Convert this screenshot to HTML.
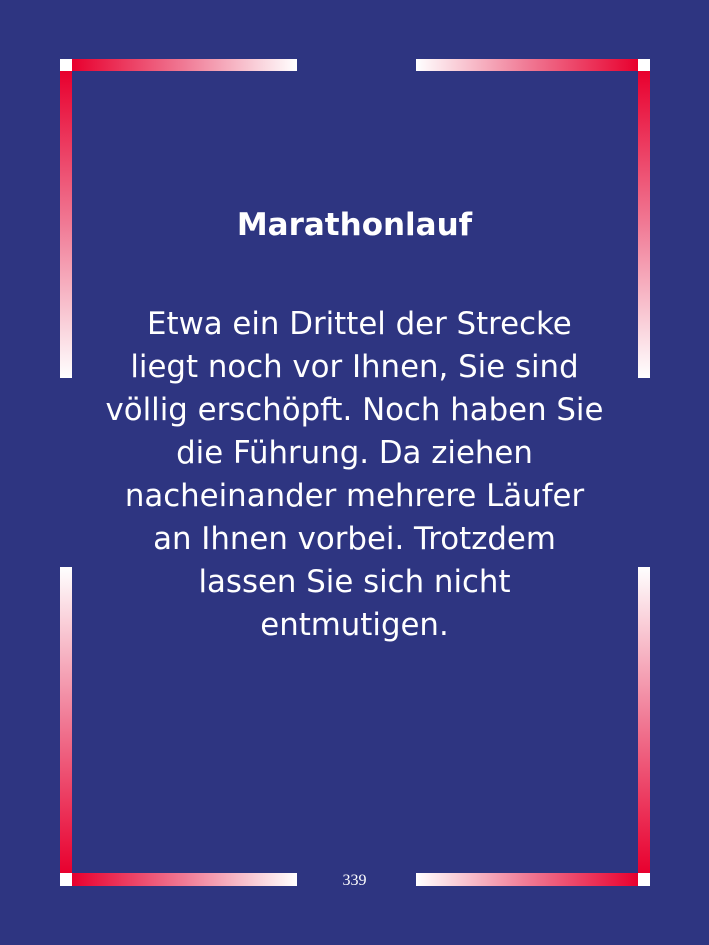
<!DOCTYPE html>
<html><head><meta charset="utf-8"><style>
html,body{margin:0;padding:0}
body{width:709px;height:945px;background:#2e3581;position:relative;overflow:hidden;font-family:"DejaVu Sans","Liberation Sans",sans-serif;color:#fff}
.b{position:absolute}
.sq{background:#fff;width:12px;height:12px}
h1{position:absolute;top:204px;left:0;width:709px;text-align:center;font-size:31px;font-weight:bold;margin:0;line-height:42px}
.t{position:absolute;top:303px;left:0;width:709px;text-align:center;font-size:30.8px;line-height:43px}
.n{position:absolute;top:872px;left:0;width:709px;text-align:center;font-family:"Liberation Serif",serif;font-size:16px}
</style></head><body>
<div class="b sq" style="left:60px;top:59px"></div>
<div class="b" style="left:72px;top:59px;width:225px;height:12px;background:linear-gradient(90deg,#e8002e,#f07a95 50%,#fff)"></div>
<div class="b" style="left:60px;top:71px;width:12px;height:307px;background:linear-gradient(180deg,#e8002e,#f07a95 50%,#fff)"></div>
<div class="b sq" style="left:638px;top:59px"></div>
<div class="b" style="left:416px;top:59px;width:222px;height:12px;background:linear-gradient(270deg,#e8002e,#f07a95 50%,#fff)"></div>
<div class="b" style="left:638px;top:71px;width:12px;height:307px;background:linear-gradient(180deg,#e8002e,#f07a95 50%,#fff)"></div>
<div class="b" style="left:60px;top:567px;width:12px;height:306px;background:linear-gradient(0deg,#e8002e,#f07a95 50%,#fff)"></div>
<div class="b sq" style="left:60px;top:873px;height:13px"></div>
<div class="b" style="left:72px;top:873px;width:225px;height:13px;background:linear-gradient(90deg,#e8002e,#f07a95 50%,#fff)"></div>
<div class="b" style="left:638px;top:567px;width:12px;height:306px;background:linear-gradient(0deg,#e8002e,#f07a95 50%,#fff)"></div>
<div class="b sq" style="left:638px;top:873px;height:13px"></div>
<div class="b" style="left:416px;top:873px;width:222px;height:13px;background:linear-gradient(270deg,#e8002e,#f07a95 50%,#fff)"></div>
<h1>Marathonlauf</h1>
<div class="t">&nbsp;Etwa ein Drittel der Strecke<br>liegt noch vor Ihnen, Sie sind<br>völlig erschöpft. Noch haben Sie<br>die Führung. Da ziehen<br>nacheinander mehrere Läufer<br>an Ihnen vorbei. Trotzdem<br>lassen Sie sich nicht<br>entmutigen.</div>
<div class="n">339</div>
</body></html>
